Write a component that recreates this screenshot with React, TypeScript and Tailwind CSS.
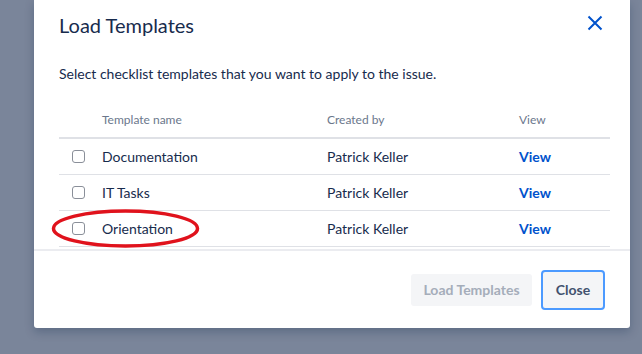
export default function App() {
  const rows = [
    { name: 'Documentation', by: 'Patrick Keller' },
    { name: 'IT Tasks', by: 'Patrick Keller' },
    { name: 'Orientation', by: 'Patrick Keller' },
  ]

  return (
    <div
      className="relative h-[354px] w-[642px] overflow-hidden bg-[#7a859a]"
      style={{ fontFamily: 'Lato, "Noto Sans", sans-serif' }}
    >
      <div className="ml-[34px] flex h-[328px] w-[596px] flex-col rounded-b-[3px] bg-white shadow-[0_4px_10px_rgba(9,30,66,0.25)]">
        {/* header */}
        <div className="flex h-[50px] items-center justify-between pl-[25px] pr-[23px]">
          <h1 className="text-[20px] leading-6 text-[#172b4d]">Load Templates</h1>
          <button className="-mt-[5px] flex h-6 w-6 items-center justify-center text-[#0052cc]">
            <svg width="16" height="16" viewBox="0 0 16 16" fill="none" stroke="currentColor" strokeWidth="2">
              <path d="M1.5 1.5l13 13M14.5 1.5l-13 13" />
            </svg>
          </button>
        </div>

        {/* body */}
        <div className="pl-[25px] pr-[20px]">
          <p className="mt-[14px] text-[14px] leading-5 text-[#172b4d]">
            Select checklist templates that you want to apply to the issue.
          </p>

          <div className="mt-[19px]">
            <div className="grid h-[36px] grid-cols-[43px_225px_192px_1fr] items-center border-b-2 border-[#dfe1e6] text-[12px] text-[#6b778c]">
              <span />
              <span>Template name</span>
              <span>Created by</span>
              <span>View</span>
            </div>
            {rows.map((r) => (
              <div
                key={r.name}
                className="grid h-[36px] grid-cols-[43px_225px_192px_1fr] items-center border-b border-[#dfe1e6] text-[14px] text-[#172b4d]"
              >
                <span className="pl-[13px]">
                  <span className="block h-[13px] w-[13px] rounded-[3px] border-[1.5px] border-[#8a8f99] bg-white" />
                </span>
                <span>{r.name}</span>
                <span>{r.by}</span>
                <a className="font-bold text-[#0052cc]">View</a>
              </div>
            ))}
          </div>
        </div>

        {/* footer */}
        <div className="mt-[2px] border-t-2 border-[#ebecf0]" />
        <div className="flex flex-1 items-center justify-end gap-[9px] pr-[25px]">
          <button className="h-[32px] w-[121px] rounded-[3px] bg-[#f4f5f7] text-[14px] font-bold text-[#a5adba]">
            Load Templates
          </button>
          <button className="h-[40px] w-[64px] rounded-[4px] border-2 border-[#4c9aff] bg-[#f4f5f7] text-[14px] font-bold text-[#42526e]">
            Close
          </button>
        </div>
      </div>

      {/* annotation */}
      <svg className="absolute left-0 top-0" width="642" height="354" fill="none">
        <ellipse cx="125.5" cy="228.5" rx="72" ry="17.5" stroke="#e0121c" strokeWidth="3.5" />
      </svg>
    </div>
  )
}
